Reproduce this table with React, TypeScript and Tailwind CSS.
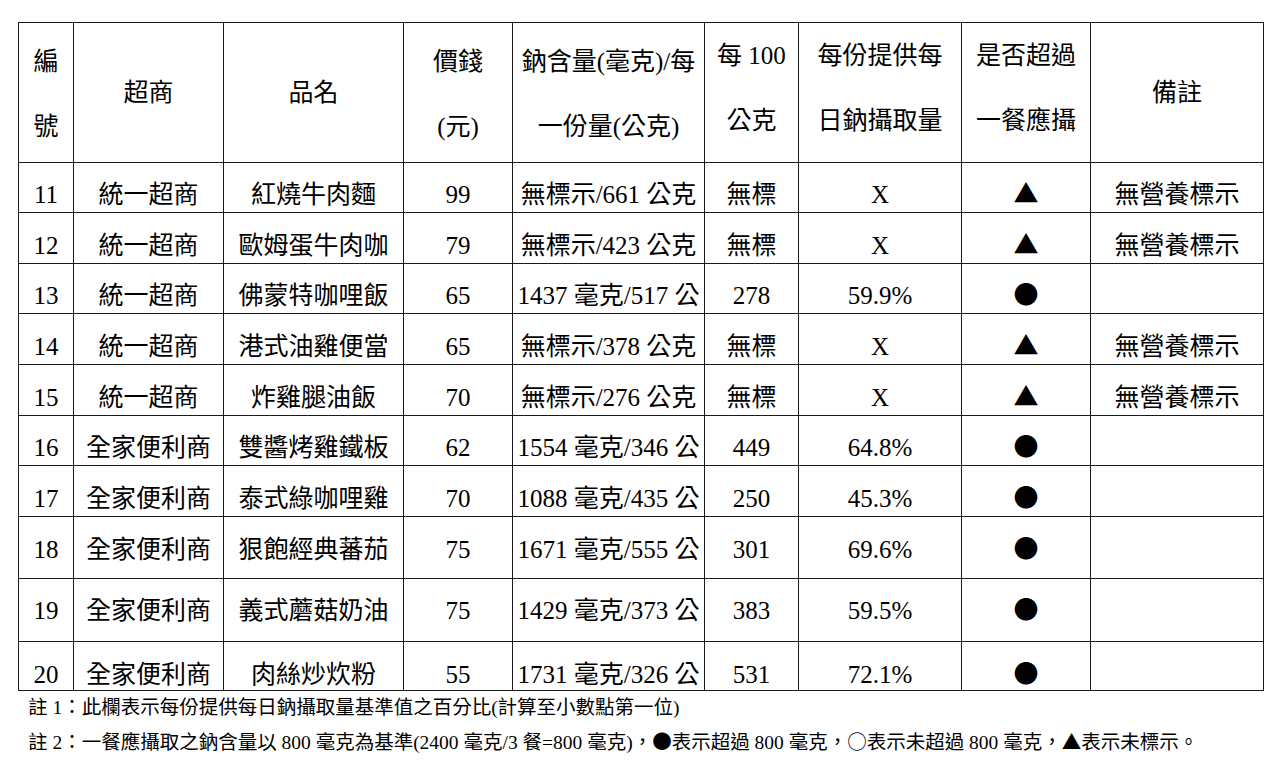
import React from 'react';

interface Row {
  no: string;
  store: string;
  name: string;
  price: string;
  sodium: string;
  per100: string;
  daily: string;
  mark: string;
  note: string;
  h: string;
  pb: string;
}

const rows: Row[] = [
  { no: '11', store: '統一超商', name: '紅燒牛肉麵', price: '99', sodium: '無標示/661 公克', per100: '無標', daily: 'X', mark: '▲', note: '無營養標示', h: 'h-[50px]', pb: 'pb-[4px]' },
  { no: '12', store: '統一超商', name: '歐姆蛋牛肉咖', price: '79', sodium: '無標示/423 公克', per100: '無標', daily: 'X', mark: '▲', note: '無營養標示', h: 'h-[51px]', pb: 'pb-[4px]' },
  { no: '13', store: '統一超商', name: '佛蒙特咖哩飯', price: '65', sodium: '1437 毫克/517 公', per100: '278', daily: '59.9%', mark: '●', note: '', h: 'h-[50px]', pb: 'pb-[4px]' },
  { no: '14', store: '統一超商', name: '港式油雞便當', price: '65', sodium: '無標示/378 公克', per100: '無標', daily: 'X', mark: '▲', note: '無營養標示', h: 'h-[51px]', pb: 'pb-[4px]' },
  { no: '15', store: '統一超商', name: '炸雞腿油飯', price: '70', sodium: '無標示/276 公克', per100: '無標', daily: 'X', mark: '▲', note: '無營養標示', h: 'h-[51px]', pb: 'pb-[4px]' },
  { no: '16', store: '全家便利商', name: '雙醬烤雞鐵板', price: '62', sodium: '1554 毫克/346 公', per100: '449', daily: '64.8%', mark: '●', note: '', h: 'h-[50px]', pb: 'pb-[4px]' },
  { no: '17', store: '全家便利商', name: '泰式綠咖哩雞', price: '70', sodium: '1088 毫克/435 公', per100: '250', daily: '45.3%', mark: '●', note: '', h: 'h-[51px]', pb: 'pb-[4px]' },
  { no: '18', store: '全家便利商', name: '狠飽經典蕃茄', price: '75', sodium: '1671 毫克/555 公', per100: '301', daily: '69.6%', mark: '●', note: '', h: 'h-[62px]', pb: 'pb-[15px]' },
  { no: '19', store: '全家便利商', name: '義式蘑菇奶油', price: '75', sodium: '1429 毫克/373 公', per100: '383', daily: '59.5%', mark: '●', note: '', h: 'h-[63px]', pb: 'pb-[17px]' },
  { no: '20', store: '全家便利商', name: '肉絲炒炊粉', price: '55', sodium: '1731 毫克/326 公', per100: '531', daily: '72.1%', mark: '●', note: '', h: 'h-[49px]', pb: 'pb-[2px]' },
];

const Sym = ({ c }: { c: string }) => (
  <span className="font-['Noto_Sans_CJK_TC',sans-serif]">{c}</span>
);

const cell = 'border border-[#1a1a1a] p-0 text-center whitespace-nowrap overflow-hidden';
// header cells: two-line groups sit at slightly different heights in the source
const headA = `${cell} font-normal align-top pt-[6px]`;
const headB = `${cell} font-normal align-top pt-0`;
const headC = `${cell} font-normal align-middle`;

export default function App() {
  return (
    <div className="w-[1284px] h-[770px] bg-white text-black overflow-hidden font-['Liberation_Serif','Noto_Sans_CJK_TC',serif]">
      <table className="ml-[18px] mt-[22px] w-[1245px] table-fixed border-collapse text-[25px] leading-[26px]">
        <colgroup>
          <col className="w-[55px]" />
          <col className="w-[150px]" />
          <col className="w-[180px]" />
          <col className="w-[109px]" />
          <col className="w-[192px]" />
          <col className="w-[94px]" />
          <col className="w-[163px]" />
          <col className="w-[129px]" />
          <col className="w-[173px]" />
        </colgroup>
        <thead>
          <tr className="h-[140px] leading-[65px]">
            <th className={headA}>
              <div>編</div>
              <div>號</div>
            </th>
            <th className={headC}>超商</th>
            <th className={headC}>品名</th>
            <th className={headA}>
              <div>價錢</div>
              <div>(元)</div>
            </th>
            <th className={headA}>
              <div>鈉含量(毫克)/每</div>
              <div>一份量(公克)</div>
            </th>
            <th className={headB}>
              <div>每 100</div>
              <div>公克</div>
            </th>
            <th className={headB}>
              <div>每份提供每</div>
              <div>日鈉攝取量</div>
            </th>
            <th className={headB}>
              <div>是否超過</div>
              <div>一餐應攝</div>
            </th>
            <th className={headC}>備註</th>
          </tr>
        </thead>
        <tbody>
          {rows.map((r) => (
            <tr key={r.no} className={r.h}>
              <td className={`${cell} align-bottom ${r.pb}`}>{r.no}</td>
              <td className={`${cell} align-bottom ${r.pb}`}>{r.store}</td>
              <td className={`${cell} align-bottom ${r.pb}`}>{r.name}</td>
              <td className={`${cell} align-bottom ${r.pb}`}>{r.price}</td>
              <td className={`${cell} align-bottom ${r.pb}`}>{r.sodium}</td>
              <td className={`${cell} align-bottom ${r.pb}`}>{r.per100}</td>
              <td className={`${cell} align-bottom ${r.pb}`}>{r.daily}</td>
              <td className={`${cell} align-bottom ${r.pb}`}>
                <Sym c={r.mark} />
              </td>
              <td className={`${cell} align-bottom ${r.pb}`}>{r.note}</td>
            </tr>
          ))}
        </tbody>
      </table>

      {/* Notes */}
      <div className="pl-[28px] text-[19.5px] leading-[33px]">
        <p>註 1：此欄表示每份提供每日鈉攝取量基準值之百分比(計算至小數點第一位)</p>
        <p>
          註 2：一餐應攝取之鈉含量以 800 毫克為基準(2400 毫克/3 餐=800 毫克)，<Sym c="●" />表示超過 800 毫克，<Sym c="○" />
          表示未超過 800 毫克，<Sym c="▲" />表示未標示。
        </p>
      </div>
    </div>
  );
}
